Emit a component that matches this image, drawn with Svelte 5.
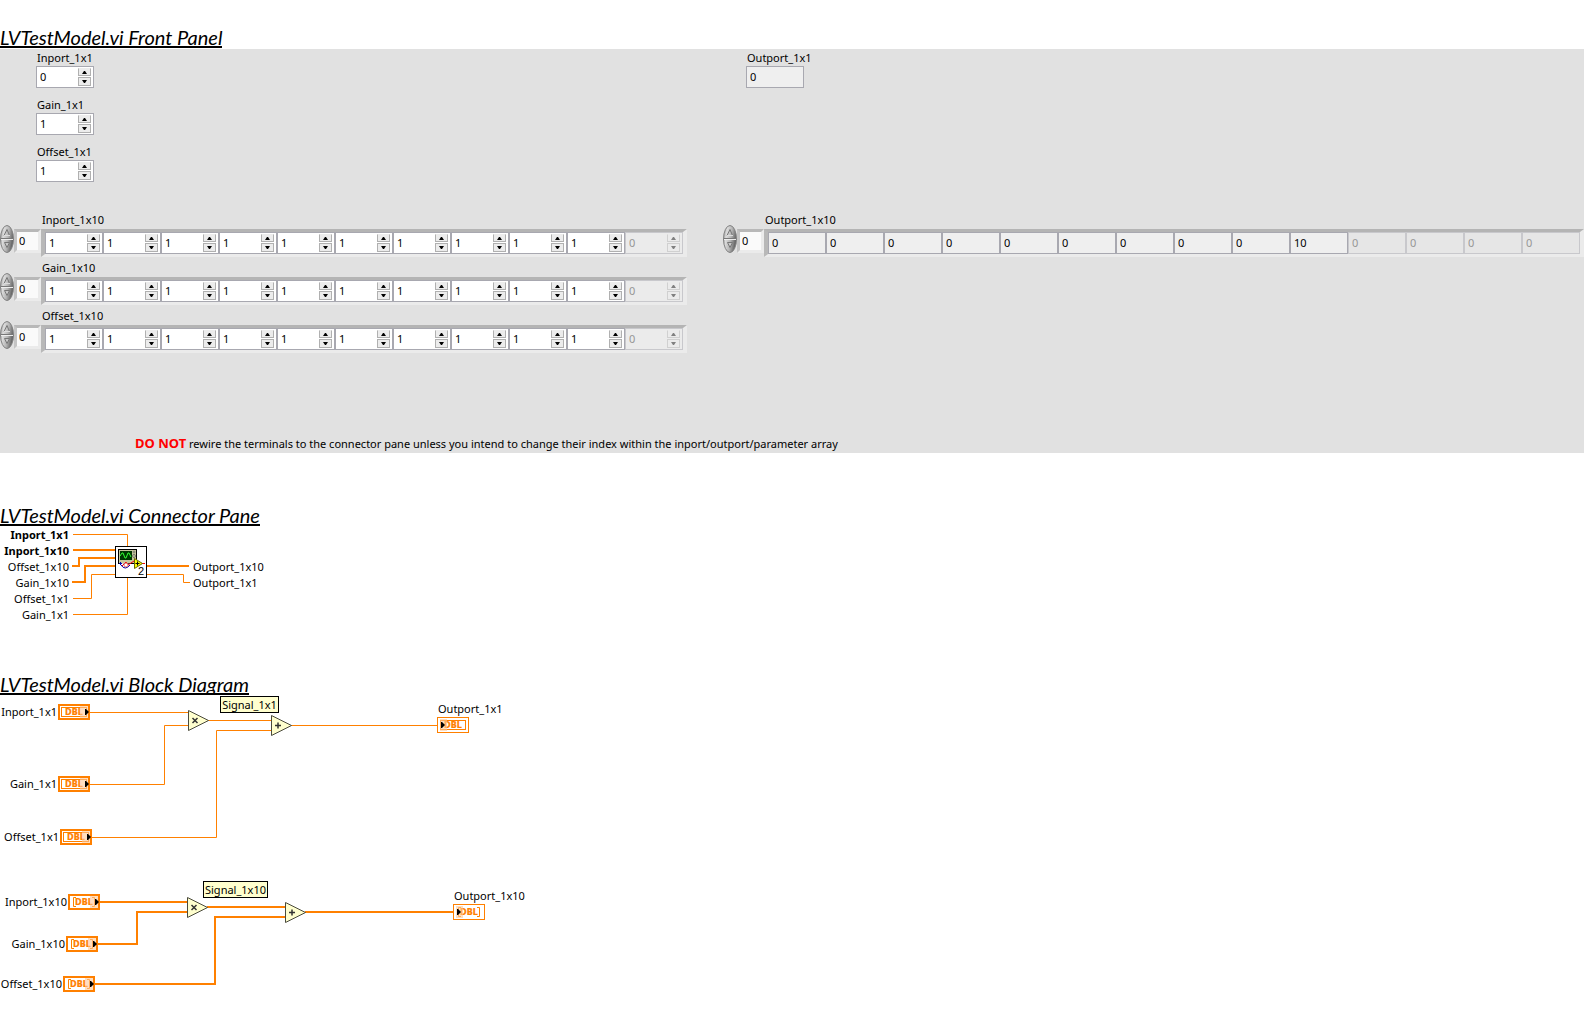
<script>
  const scalars = [
    { id: 'in1', label: 'Inport_1x1', value: '0' },
    { id: 'gain1', label: 'Gain_1x1', value: '1' },
    { id: 'off1', label: 'Offset_1x1', value: '1' }
  ];
  const arrays = ['Inport_1x10', 'Gain_1x10', 'Offset_1x10'];
  const inputCells = [...Array(10).fill('1'), '0'];
  const outputCells = [...Array(9).fill('0'), '10', '0', '0', '0', '0'];

  const inputs = [
    { label: 'Inport_1x1', y: 12, bold: true },
    { label: 'Inport_1x10', y: 28, bold: true },
    { label: 'Offset_1x10', y: 44 },
    { label: 'Gain_1x10', y: 60 },
    { label: 'Offset_1x1', y: 76 },
    { label: 'Gain_1x1', y: 92 }
  ];

  const terminals = [
    { label: 'Inport_1x1', x: 58, y: 8 },
    { label: 'Gain_1x1', x: 58, y: 80 },
    { label: 'Offset_1x1', x: 60, y: 133 },
    { label: 'Inport_1x10', x: 68, y: 198, array: true },
    { label: 'Gain_1x10', x: 66, y: 240, array: true },
    { label: 'Offset_1x10', x: 63, y: 280, array: true }
  ];
  const sinks = [
    { label: 'Outport_1x1', x: 437, y: 21 },
    { label: 'Outport_1x10', x: 453, y: 208, array: true }
  ];
  const nodes = [
    { x: 188, y: 14, op: 'x' },
    { x: 271, y: 19, op: '+' },
    { x: 187, y: 201, op: 'x' },
    { x: 285, y: 206, op: '+' }
  ];
  const signals = [
    { label: 'Signal_1x1', x: 220, y: 0, w: 59 },
    { label: 'Signal_1x10', x: 203, y: 185, w: 65 }
  ];
</script>

{#snippet spinner(name)}
  <span class="spin">
    <button type="button" aria-label="Increase {name}"><svg width="5" height="3" viewBox="0 0 5 3"><path d="M2 0H3L5 3H0Z" /></svg></button>
    <button type="button" aria-label="Decrease {name}"><svg width="5" height="3" viewBox="0 0 5 3"><path d="M2 3H3L5 0H0Z" /></svg></button>
  </span>
{/snippet}

{#snippet index(name)}
  <div class="index">
    <svg class="knob" width="14" height="28" viewBox="0 0 14 28" aria-hidden="true">
      <defs>
        <linearGradient id="metal" x1="0" y1="0" x2="1" y2="0.3">
          <stop offset="0" stop-color="#8a8a8a" />
          <stop offset=".3" stop-color="#dcdcdc" />
          <stop offset=".65" stop-color="#b4b4b4" />
          <stop offset="1" stop-color="#666" />
        </linearGradient>
      </defs>
      <ellipse cx="7" cy="14" rx="6.500" ry="13.500" fill="url(#metal)" stroke="#808080" />
      <path d="M1 13.500H13" stroke="#777" />
      <path d="M1 14.500H13" stroke="#eee" />
      <path d="M4 10.500L7 4.500L9.500 10.500" fill="none" stroke="#777" />
      <path d="M4 10.500H10" stroke="#ddd" />
      <path d="M4.500 17.500H9.500L7 22.500Z" fill="#c8c8c8" stroke="#777" />
    </svg>
    <input class="index-box" type="text" value="0" aria-label="{name} index" />
  </div>
{/snippet}

{#snippet dbl(t, sink)}
  <g transform="translate({t.x} {t.y})">
    {#if sink}
      <rect x=".5" y=".5" width="31" height="15" fill="#fff" stroke="#ff8000" />
    {:else}
      <rect x="1" y="1" width="30" height="14" fill="#fff" stroke="#ff8000" stroke-width="2" />
    {/if}
    {#if t.array}
      <path d="M8 3.500H5.500V12.500H8M24 3.500H26.500V12.500H24" fill="none" stroke="#ff8000" />
    {:else}
      <rect x="3.500" y="3.500" width="25" height="9" fill="none" stroke="#ff8000" />
    {/if}
    <text class="type" x="16" y="11" text-anchor="middle">DBL</text>
    {#if sink}
      <rect x="3" y="2" width="7" height="12" fill="#ffc896" opacity=".6" />
      <path d="M4 5H5L8 8L5 11H4Z" />
    {:else}
      <rect x="22" y="2" width="8" height="12" fill="#ffc896" opacity=".6" />
      <path d="M27 5H28L31 8L28 11H27Z" />
    {/if}
  </g>
{/snippet}

<main>
  <h1><span>LVTestModel.vi Front Panel</span></h1>
  <section class="panel">
    <div class="side">
      <div class="scalars">
        {#each scalars as s}
          <div class="scalar">
            <label for={s.id}>{s.label}</label>
            <div class="cell"><input id={s.id} type="text" value={s.value} />{@render spinner(s.label)}</div>
          </div>
        {/each}
      </div>
      {#each arrays as name}
        <div class="array" role="group" aria-label={name}>
          <div class="caption">{name}</div>
          <div class="row">
            {@render index(name)}
            <div class="frame">
              {#each inputCells as v, i}
                <div class="cell" class:off={i > 9}>
                  <input type="text" value={v} disabled={i > 9} aria-label="{name} {i}" />{@render spinner(name)}
                </div>
              {/each}
            </div>
          </div>
        </div>
      {/each}
    </div>
    <div class="side">
      <div class="scalars">
        <div class="scalar">
          <label for="out1">Outport_1x1</label>
          <div class="cell read"><input id="out1" type="text" value="0" readonly /></div>
        </div>
      </div>
      <div class="array" role="group" aria-label="Outport_1x10">
        <div class="caption">Outport_1x10</div>
        <div class="row">
          {@render index('Outport_1x10')}
          <div class="frame">
            {#each outputCells as v, i}
              <div class="cell read" class:off={i > 9}>
                <input type="text" value={v} readonly disabled={i > 9} aria-label="Outport_1x10 {i}" />
              </div>
            {/each}
          </div>
        </div>
      </div>
    </div>
    <p class="warning"><strong>DO NOT</strong> rewire the terminals to the connector pane unless you intend to change their index within the inport/outport/parameter array</p>
  </section>

  <h1 class="second"><span>LVTestModel.vi Connector Pane</span></h1>
  <svg class="connector" width="300" height="100" viewBox="0 0 300 100">
    <g class="thin">
      <path d="M73 7.500H127.500V20M73 71.500H91.500V47.500H116M73 87.500H127.500V50" />
      <path d="M146 47.500H183.500V55.500H190" />
    </g>
    <g class="thick">
      <path d="M73 23H116M72 39H79V31H116M72 55H85V39H116M146 39H189" />
    </g>
    {#each inputs as t}
      <text x="69" y={t.y} text-anchor="end" class:bold={t.bold}>{t.label}</text>
    {/each}
    <text x="193" y="44">Outport_1x10</text>
    <text x="193" y="60">Outport_1x1</text>
    <g transform="translate(115 19)">
      <rect x=".5" y=".5" width="31" height="31" fill="#fff" stroke="#000" />
      <rect x="3.500" y="3.500" width="18" height="14" fill="#c8c8a0" stroke="#000" />
      <rect x="5" y="5" width="12" height="9" fill="#003800" />
      <path d="M5 10L7 7H8L10 12H11L13 7H14L16 11" fill="none" stroke="#3f3" />
      <circle cx="19" cy="6" r="1" fill="none" stroke="#555" stroke-width=".6" />
      <circle cx="19" cy="10" r="1.500" fill="none" stroke="#555" stroke-width=".7" />
      <path d="M6 17V19L8 22H13L16 18Z" fill="#fff" />
      <path d="M4 17.500H7M5.500 16V19M6 19Q10 25 15 19" fill="none" stroke="#00a" />
      <path d="M7 20L11 16L13 19L19 15M26 17.500H30" fill="none" stroke="#f00" />
      <circle cx="11" cy="19" r="2" fill="#fff" stroke="#d33" stroke-width=".7" />
      <path d="M19.500 12.500V22.500L27.500 17.500Z" fill="#ff0" stroke="#660" />
      <path d="M20.500 17.500H24.500M22.500 15.500V19.500" stroke="#000" />
      <text class="badge" x="23" y="29">2</text>
    </g>
  </svg>

  <h1 class="third"><span>LVTestModel.vi Block Diagram</span></h1>
  <svg class="diagram" width="560" height="300" viewBox="0 0 560 300">
    <g class="thin">
      <path d="M90 16.500H189M90 88.500H164.500V29.500H189M208 24.500H272M92 141.500H216.500V34.500H272M291 29.500H437" />
    </g>
    <g class="thick">
      <path d="M100 206H188M98 248H137V216H188M207 211H286M95 288H215V221H286M305 216H453" />
    </g>
    {#each nodes as n}
      <g transform="translate({n.x} {n.y})">
        <path d="M.5 .5L20.500 10.500L.5 20.500Z" fill="#ffffce" stroke="#4a4a3c" />
        {#if n.op === 'x'}
          <path d="M4.500 8L9.500 13M9.500 8L4.500 13" stroke="#333" stroke-width="1.500" />
        {:else}
          <path d="M4 10.500H10M7 7.500V13.500" stroke="#333" stroke-width="1.500" />
        {/if}
      </g>
    {/each}
    {#each terminals as t}
      <text x={t.x - 1} y={t.y + 12} text-anchor="end">{t.label}</text>
      {@render dbl(t, false)}
    {/each}
    {#each sinks as t}
      <text x={t.x + 1} y={t.y - 4}>{t.label}</text>
      {@render dbl(t, true)}
    {/each}
    {#each signals as s}
      <rect x={s.x + 0.5} y={s.y + 0.5} width={s.w - 1} height="16" fill="#ffffce" stroke="#000" />
      <text x={s.x + s.w / 2} y={s.y + 13} text-anchor="middle">{s.label}</text>
    {/each}
  </svg>
</main>

<style>
  :global(body) {
    margin: 0;
    background: #fff;
  }
  main {
    font: 11px/16px "Noto Sans", "Open Sans", sans-serif;
    color: #000;
    padding-top: 27px;
    overflow-x: hidden;
  }
  h1 {
    margin: 0;
    height: 22px;
    font: italic 20px/20px Lato, sans-serif;
  }
  h1 span {
    display: block;
    width: max-content;
    height: 19px;
    border-bottom: 2px solid #000;
    white-space: nowrap;
  }
  .second { margin-top: 52px; }
  .third { margin-top: 47px; }
  .third span { overflow: hidden; }
  .panel {
    display: grid;
    grid-template-columns: 723px 1fr;
    background: #e1e1e1;
  }
  .side { min-width: 0; }
  .scalars {
    display: flex;
    flex-direction: column;
    gap: 8px;
    height: 162px;
    padding-left: 36px;
  }
  .side + .side .scalars { padding-left: 23px; }
  .scalar label {
    display: block;
    padding: 1px 0 0 1px;
    height: 16px;
  }
  .cell {
    box-sizing: border-box;
    display: flex;
    align-items: flex-start;
    width: 58px;
    height: 22px;
    flex: none;
    background: #fff;
    border: 1px solid #a8a8b0;
    padding-right: 2px;
  }
  .cell.read { background: #efefef; }
  .cell.off {
    background: #ebebeb;
    border-color: #c8c8cc;
  }
  .cell.read.off { background: #e6e6e6; }
  input {
    font: inherit;
    color: inherit;
    background: none;
    border: 0;
    outline: 0;
    border-radius: 0;
    box-sizing: border-box;
  }
  .cell input {
    flex: 1;
    min-width: 0;
    padding: 0 0 1px 3px;
    height: 20px;
  }
  .off input { color: #969696; }
  .spin {
    display: flex;
    flex-direction: column;
    width: 13px;
    gap: 1px;
    margin-top: 1px;
  }
  .spin button {
    box-sizing: border-box;
    display: flex;
    align-items: center;
    justify-content: center;
    width: 13px;
    height: 8px;
    padding: 0;
    border: 1px solid #b0b0b0;
    border-top-color: #ececec;
    background: #ececec;
  }
  .spin button + button {
    height: 9px;
    border-color: #b0b0b0;
  }
  .off .spin { opacity: .45; }
  .array { height: 48px; }
  .caption {
    box-sizing: border-box;
    height: 18px;
    padding: 1px 0 0 42px;
  }
  .row {
    display: flex;
    align-items: flex-start;
  }
  .index {
    display: flex;
    align-items: flex-start;
    width: 41px;
    flex: none;
  }
  .knob {
    flex: none;
    margin-top: -4px;
  }
  .index-box {
    width: 27px;
    height: 24px;
    padding: 0 0 1px 2px;
    background: #fafafa;
    border: 3px solid #ebebeb;
    border-top-color: #b8b8b8;
    border-left-color: #c4c4c4;
  }
  .frame {
    display: flex;
    border: 3px solid #ebebeb;
    border-width: 3px 4px;
    border-top-color: #b4b4b4;
    border-left-color: #b8b8b8;
  }
  .warning {
    grid-column: 1 / -1;
    margin: 0;
    padding: 79px 0 0 135px;
    line-height: 18px;
    white-space: nowrap;
  }
  .warning strong {
    color: #f00;
    font-size: 13px;
  }
  svg { display: block; }
  svg text { fill: #000; }
  svg .bold { font-weight: 700; }
  svg .type {
    font: 700 8px "DejaVu Sans", sans-serif;
    fill: #ff8000;
    stroke: #ff8000;
    stroke-width: .2px;
  }
  svg .badge { font: 11px "Liberation Sans", sans-serif; }
  .thin path, .thick path {
    fill: none;
    stroke: #ff8000;
  }
  .thick path { stroke-width: 2px; }
</style>
